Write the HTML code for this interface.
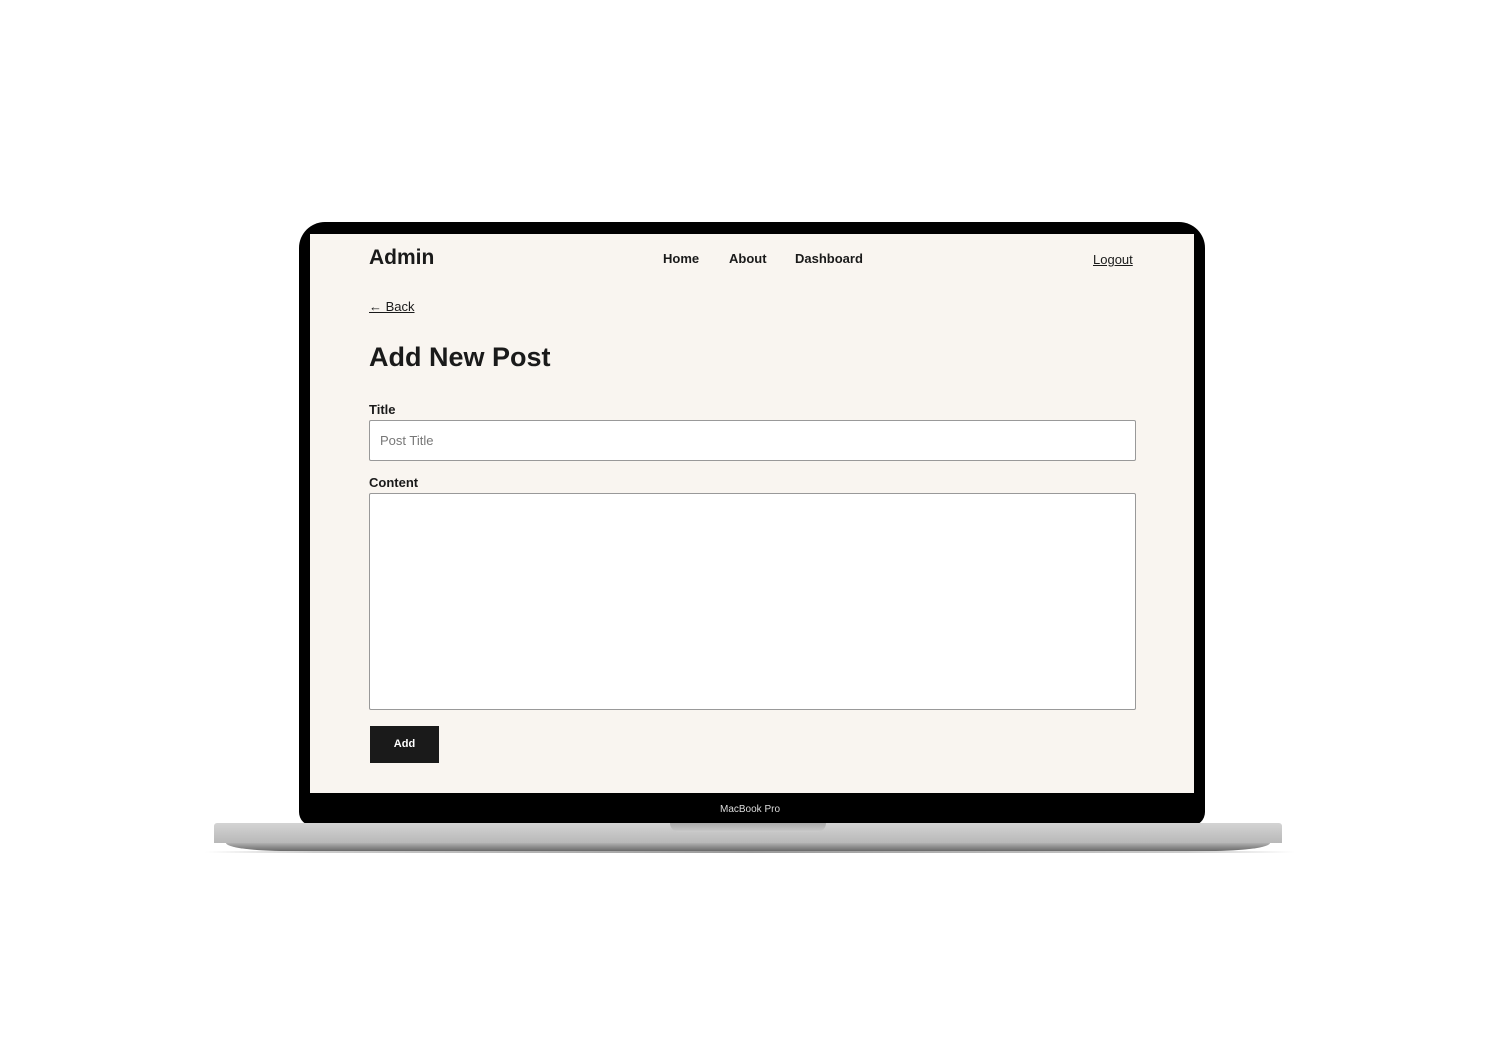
<!DOCTYPE html>
<html><head><meta charset="utf-8"><style>
body{margin:0;width:1500px;height:1038px;background:#fff;position:relative;overflow:hidden;font-family:"Liberation Sans",sans-serif}
.lid{position:absolute;left:299px;top:222px;width:906px;height:604px;background:#000;border-radius:26px 26px 14px 14px}
.screen{position:absolute;left:310px;top:234px;width:884px;height:559px;background:#f9f5f0;color:#1a1a1a}
.base{position:absolute;left:214px;top:823px;width:1068px;height:20px;background:linear-gradient(#d4d4d4,#b8b8b8);border-radius:3px 3px 0 0}
.base2{position:absolute;left:226px;top:843px;width:1044px;height:8px;background:linear-gradient(#b0b0b0,#6a6a6a);border-radius:0 0 60px 60px/0 0 8px 8px}
.shadow{position:absolute;left:205px;top:851px;width:1090px;height:2px;background:linear-gradient(90deg,transparent,#ccc 10%,#999 50%,#ccc 90%,transparent)}
.notch{position:absolute;left:670px;top:823px;width:156px;height:9px;background:linear-gradient(#aaa,#ccc);border-radius:0 0 10px 10px}
.mb{position:absolute;left:0;width:1500px;top:804px;text-align:center;color:#ddd;font-size:10px}
.s{position:absolute;white-space:nowrap;font-weight:bold}
</style></head><body>
<div class="lid"></div>
<div class="screen">
<div class="s" style="left:59px;top:12px;font-size:21px">Admin</div>
<div class="s" style="left:353px;top:17px;font-size:13px">Home</div>
<div class="s" style="left:419px;top:17px;font-size:13px">About</div>
<div class="s" style="left:485px;top:17px;font-size:13px">Dashboard</div>
<div class="s" style="left:783px;top:18px;font-size:13px;font-weight:normal;text-decoration:underline">Logout</div>
<div class="s" style="left:59px;top:65px;font-size:13px;font-weight:normal;text-decoration:underline">← Back</div>
<div class="s" style="left:59px;top:108px;font-size:27px">Add New Post</div>
<div class="s" style="left:59px;top:168px;font-size:13px">Title</div>
<div style="position:absolute;left:59px;top:186px;width:767px;height:41px;background:#fff;border:1px solid #999;box-sizing:border-box;border-radius:2px"><span style="position:absolute;left:10px;top:12px;font-size:13px;color:#777">Post Title</span></div>
<div class="s" style="left:59px;top:241px;font-size:13px">Content</div>
<div style="position:absolute;left:59px;top:259px;width:767px;height:217px;background:#fff;border:1px solid #999;box-sizing:border-box;border-radius:2px"></div>
<div style="position:absolute;left:60px;top:492px;width:69px;height:37px;background:#1a1a1a;color:#fff;font-size:11px;font-weight:bold;text-align:center;line-height:37px">Add</div>
</div>
<div class="mb">MacBook Pro</div>
<div class="base"></div>
<div class="base2"></div>
<div class="shadow"></div>
<div class="notch"></div>
</body></html>
